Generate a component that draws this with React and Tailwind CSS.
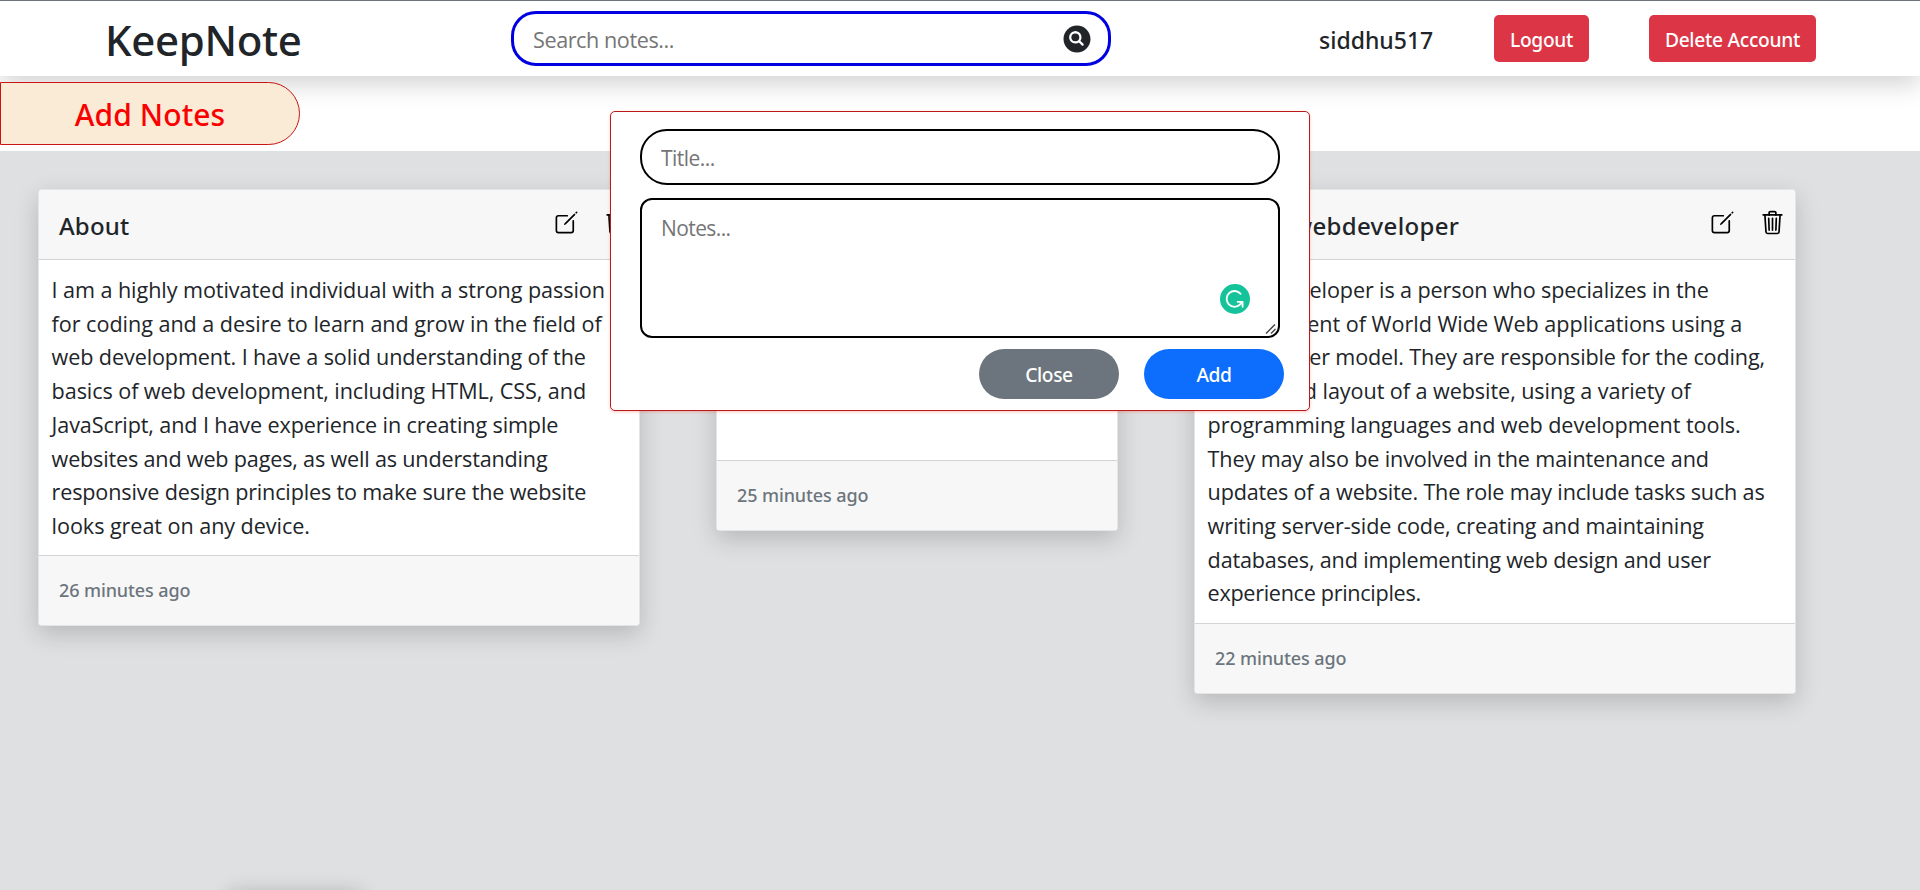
import { IoCreateOutline, IoSearchCircle, IoTrashOutline } from "react-icons/io5";

const aboutLines = [
  ["I am a highly motivated individual with a strong passion", "tracking-[-0.07px]"],
  ["for coding and a desire to learn and grow in the field of", "tracking-[-0.04px]"],
  ["web development. I have a solid understanding of the", "tracking-[-0.11px]"],
  ["basics of web development, including HTML, CSS, and", "tracking-[-0.08px]"],
  ["JavaScript, and I have experience in creating simple", "tracking-[-0.12px]"],
  ["websites and web pages, as well as understanding", "tracking-[-0.18px]"],
  ["responsive design principles to make sure the website", "tracking-[-0.17px]"],
  ["looks great on any device.", "tracking-[-0.06px]"],
];

const developerLines = [
  ["A web developer is a person who specializes in the", "tracking-[-0.12px]"],
  ["development of World Wide Web applications using a", "tracking-[-0.03px]"],
  ["client-server model. They are responsible for the coding,", "tracking-[-0.15px]"],
  ["design and layout of a website, using a variety of", "tracking-[-0.07px]"],
  ["programming languages and web development tools.", "tracking-[-0.07px]"],
  ["They may also be involved in the maintenance and", "tracking-[-0.13px]"],
  ["updates of a website. The role may include tasks such as", "tracking-[-0.18px]"],
  ["writing server-side code, creating and maintaining", "tracking-[-0.11px]"],
  ["databases, and implementing web design and user", "tracking-[-0.17px]"],
  ["experience principles.", "tracking-[-0.3px]"],
];

function NoteCard({ title, titleClass = "", lines, age, widthClass, bodyClass }) {
  return (
    <article
      className={`${widthClass} flex flex-col overflow-hidden rounded-[4px] border border-black/10 bg-white shadow-[0_8px_24px_rgba(0,0,0,0.18)]`}
    >
      <header className="flex h-[70px] shrink-0 items-center justify-between border-b border-black/[0.14] bg-[#f7f7f7] pr-[9px] pl-[20px]">
        <h2 className={`pt-[2px] font-['Noto_Sans',sans-serif] text-[24px] font-medium whitespace-nowrap ${titleClass}`}>
          {title}
        </h2>
        <div className="flex gap-[23px] pb-[5px] text-[27px] text-black">
          <IoCreateOutline />
          <IoTrashOutline />
        </div>
      </header>
      <div className={`pt-[13px] pl-[12.6px] text-[21.6px] leading-[33.7px] whitespace-nowrap ${bodyClass}`}>
        {lines.map(([text, tracking]) => (
          <p key={text} className={tracking}>
            {text}
          </p>
        ))}
      </div>
      <footer className="flex h-[70px] shrink-0 items-center border-t border-black/[0.14] bg-[#f7f7f7] pl-[20px] font-['Noto_Sans',sans-serif] text-[18px] font-medium tracking-[-0.1px] text-[#6c757d]">
        {age}
      </footer>
    </article>
  );
}

function GrammarBadge() {
  return (
    <svg viewBox="0 0 30 30" className="absolute right-[30px] bottom-[24px] size-[30px]" fill="none">
      <circle cx="15" cy="15" r="15" fill="#15c39a" />
      <path d="M20.6 9.8A7.9 7.9 0 1 0 20.2 20.4" stroke="#fff" strokeWidth="1.8" strokeLinecap="round" />
      <path d="M17.6 17.8H22.6V22.8M22.4 18L20.2 20.4" stroke="#fff" strokeWidth="1.8" strokeLinecap="round" strokeLinejoin="round" />
    </svg>
  );
}

function ResizeGrip() {
  return (
    <svg viewBox="0 0 13 13" className="pointer-events-none absolute right-[2px] bottom-[2px] size-[13px]" fill="none">
      <path d="M1 10.5L10 1.5M6 10.5L10.5 6" stroke="#444" strokeWidth="1.4" />
    </svg>
  );
}

export default function App() {
  return (
    <div className="relative h-[890px] w-full overflow-hidden bg-[#dfe0e2] font-['Open_Sans','Noto_Sans',sans-serif] text-[#212529]">
      <header className="relative z-10 flex h-[76px] items-center border-t border-[#6f737b] bg-white shadow-[0_8px_24px_rgba(0,0,0,0.18)]">
        <h1 className="ml-[105px] w-[406px] pt-[3px] font-['Noto_Sans',sans-serif] text-[42px] leading-none font-medium tracking-[-0.35px]">
          KeepNote
        </h1>
        <label className="flex h-[55px] w-[600px] items-center rounded-[25px] border-[3px] border-[#0000e0] pr-[13px] pl-[19px]">
          <input
            placeholder="Search notes..."
            className="min-w-0 flex-1 pt-[4px] text-[21.6px] tracking-[-0.42px] outline-none placeholder:text-[#757575]"
          />
          <IoSearchCircle className="size-[36px]" />
        </label>
        <span className="ml-[208px] w-[175px] pt-[3px] font-['Noto_Sans',sans-serif] text-[23px] font-medium">
          siddhu517
        </span>
        <button className="mr-[60px] flex h-[47px] w-[95px] items-center justify-center rounded-[5px] bg-[#dc3545] pt-[4px] font-['Noto_Sans',sans-serif] text-[19.2px] font-medium tracking-[-0.35px] text-white">
          Logout
        </button>
        <button className="flex h-[47px] w-[167px] items-center justify-center rounded-[5px] bg-[#dc3545] pt-[4px] font-['Noto_Sans',sans-serif] text-[19.2px] font-medium tracking-[-0.28px] whitespace-nowrap text-white">
          Delete Account
        </button>
      </header>

      <div className="h-[75px] bg-white pt-[6px]">
        <button className="relative z-20 flex h-[63px] w-[300px] items-center justify-center rounded-r-[32px] border border-[#c81414] bg-[#faebd7] pt-[2px] font-['Noto_Sans',sans-serif] text-[30px] font-medium tracking-[0.1px] text-[#fa0000]">
          Add Notes
        </button>
      </div>

      <main className="flex items-start pt-[38px] pl-[38px]">
        <NoteCard
          title="About"
          titleClass="tracking-[0.15px]"
          lines={aboutLines}
          age="26 minutes ago"
          widthClass="w-[602px]"
          bodyClass="h-[295px]"
        />
        <NoteCard title="" lines={[]} age="25 minutes ago" widthClass="ml-[76px] w-[402px]" bodyClass="h-[200px]" />
        <NoteCard
          title="About webdeveloper"
          titleClass="tracking-[0.33px]"
          lines={developerLines}
          age="22 minutes ago"
          widthClass="ml-[76px] w-[602px]"
          bodyClass="h-[363px]"
        />
      </main>

      <form className="absolute top-[111px] left-[610px] z-30 flex h-[300px] w-[700px] flex-col rounded-[5px] border border-[#bb1a1a] bg-white px-[29px] pt-[17px] shadow-[0_1px_3px_rgba(255,60,30,0.3)]">
        <input
          placeholder="Title..."
          className="h-[56px] w-[640px] shrink-0 rounded-[27px] border-2 border-black px-[19px] pt-[2px] text-[21px] tracking-[-0.55px] outline-none placeholder:text-[#757575]"
        />
        <div className="relative mt-[13px] h-[140px] w-[640px]">
          <textarea
            placeholder="Notes..."
            className="block h-[140px] w-[640px] resize-none rounded-[12px] border-2 border-black px-[19px] pt-[12px] text-[21px] leading-[33px] tracking-[-0.6px] outline-none placeholder:text-[#757575]"
          />
          <GrammarBadge />
          <ResizeGrip />
        </div>
        <div className="mt-[11px] mr-[-4px] flex justify-end gap-[25px] font-['Noto_Sans',sans-serif] text-[19.2px] font-medium tracking-[-0.4px] text-white">
          <button type="button" className="h-[50px] w-[140px] rounded-full bg-[#6c757d] pt-[2px]">
            Close
          </button>
          <button type="button" className="h-[50px] w-[140px] rounded-full bg-[#0d6efd] pt-[2px]">
            Add
          </button>
        </div>
      </form>

      <div className="absolute top-[890px] left-[226px] h-[60px] w-[138px] rounded-[10px] bg-white shadow-[0_2px_20px_rgba(0,0,0,0.2)]" />
    </div>
  );
}
